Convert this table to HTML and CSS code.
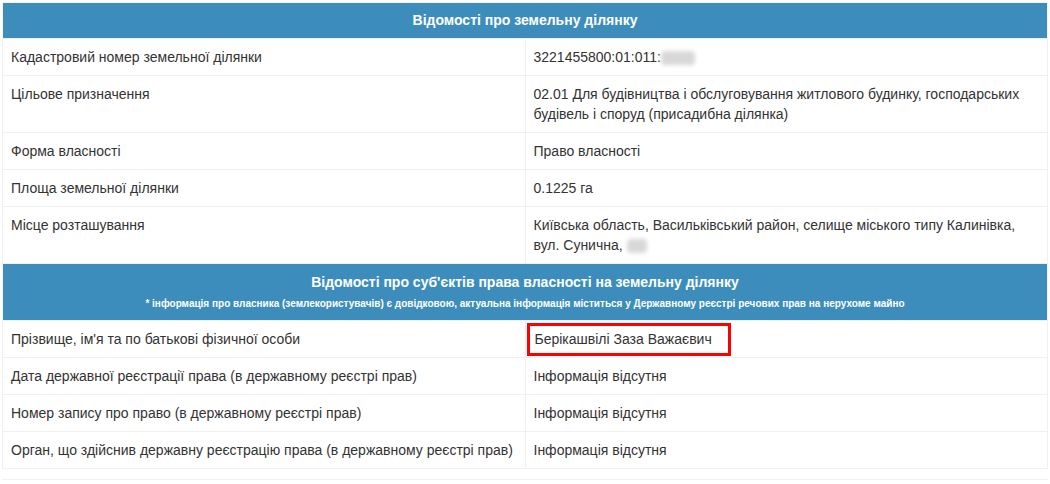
FILE: index.html
```html
<!DOCTYPE html>
<html lang="uk">
<head>
<meta charset="utf-8">
<link rel="stylesheet" href="styles.css">
</head>
<body>
<div class="wrap">
<table class="info">
  <tr class="head"><th colspan="2">Відомості про земельну ділянку</th></tr>
  <tr><td class="k">Кадастровий номер земельної ділянки</td><td>3221455800:01:011:<span class="blur w1"></span></td></tr>
  <tr><td class="k">Цільове призначення</td><td>02.01 Для будівництва і обслуговування житлового будинку, господарських будівель і споруд (присадибна ділянка)</td></tr>
  <tr><td class="k">Форма власності</td><td>Право власності</td></tr>
  <tr><td class="k">Площа земельної ділянки</td><td>0.1225 га</td></tr>
  <tr><td class="k">Місце розташування</td><td>Київська область, Васильківський район, селище міського типу Калинівка, вул. Сунична, <span class="blur w2"></span></td></tr>
  <tr class="head head2"><th colspan="2"><div class="title">Відомості про суб'єктів права власності на земельну ділянку</div><div class="note">* інформація про власника (землекористувачів) є довідковою, актуальна інформація міститься у Державному реєстрі речових прав на нерухоме майно</div></th></tr>
  <tr><td class="k">Прізвище, ім'я та по батькові фізичної особи</td><td class="hl"><div class="mark">Берікашвілі Заза Важаєвич</div></td></tr>
  <tr><td class="k">Дата державної реєстрації права (в державному реєстрі прав)</td><td>Інформація відсутня</td></tr>
  <tr><td class="k">Номер запису про право (в державному реєстрі прав)</td><td>Інформація відсутня</td></tr>
  <tr><td class="k">Орган, що здійснив державну реєстрацію права (в державному реєстрі прав)</td><td>Інформація відсутня</td></tr>
</table>
<div class="after"></div>
</div>
</body>
</html>
```
FILE: styles.css
```css
html, body { margin: 0; padding: 0; background: #fff; }
body { font-family: "Liberation Sans", Arial, sans-serif; font-size: 14px; color: #333; }
.wrap { padding: 2px 2px 0 2px; width: 1046px; }
.info { width: 1046px; border-collapse: collapse; border: 1px solid #f4f4f4; table-layout: fixed; }
.info td { padding: 8px; line-height: 20px; border: 1px solid #f0f0f0; vertical-align: top; }
.info td.k { width: 506px; }
.head th { background: #3c8dbc; color: #fff; font-weight: bold; text-align: center; padding: 8px; line-height: 19px; border: 0; }
.head2 th { padding: 8px 8px 5px; }
.head2 .title { line-height: 20px; }
.head2 .note { font-size: 10px; line-height: 22px; padding-top: 1px; }
.blur { display: inline-block; vertical-align: -3px; height: 14px; background: #d8d8d8; border-radius: 4px; filter: blur(2px); }
.w1 { width: 34px; }
.w2 { width: 20px; }
.info td.hl { padding: 2px 0 1px 1px; }
.mark { display: block; width: max-content; border: 3px solid #f00; padding: 3px 16px 4px 5px; line-height: 20px; }
.after { height: 10px; border-bottom: 1px solid #f0f0f0; }
```
